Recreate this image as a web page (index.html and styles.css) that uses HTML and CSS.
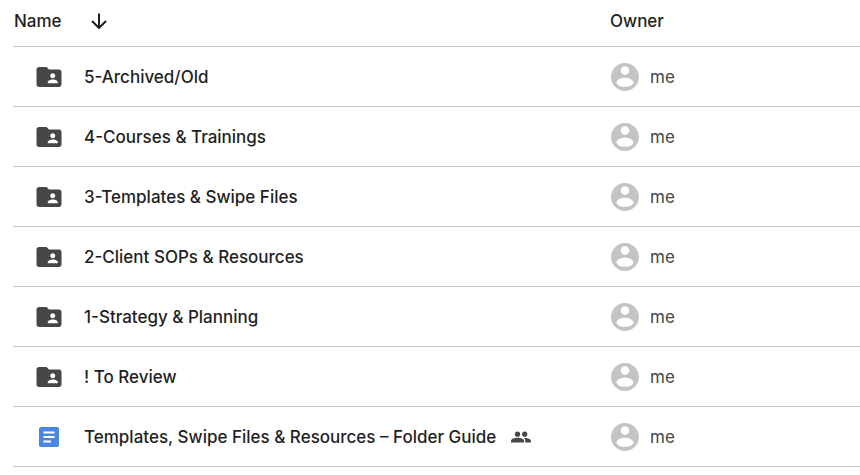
FILE: index.html
```html
<!DOCTYPE html>
<html lang="en">
<head>
<meta charset="utf-8">
<title>Files</title>
<link rel="stylesheet" href="styles.css">
</head>
<body>
<svg class="sprite" aria-hidden="true">
  <symbol id="folder" viewBox="2 4 20 16"><path d="M20 6h-8l-2-2H4c-1.1 0-1.99.9-1.99 2L2 18c0 1.1.9 2 2 2h16c1.1 0 2-.9 2-2V8c0-1.1-.9-2-2-2zm-5 3c1.1 0 2 .9 2 2s-.9 2-2 2-2-.9-2-2 .9-2 2-2zm4 8h-8v-1c0-1.33 2.67-2 4-2s4 .67 4 2v1z"/></symbol>
  <symbol id="avatar" viewBox="2 2 20 20"><path d="M12 2C6.480 2 2 6.480 2 12s4.480 10 10 10 10-4.480 10-10S17.520 2 12 2zm0 2.300c1.700 0 3.100 1.400 3.100 3.100s-1.400 3.100-3.100 3.100-3.100-1.400-3.100-3.100 1.400-3.100 3.100-3.100zM12 19c-2.800 0-5-1-6.200-2.800.4-2.400 3.200-3.700 6.200-3.700s5.800 1.300 6.200 3.700C17 18 14.800 19 12 19z"/></symbol>
</svg>
<table class="files">
  <thead>
    <tr>
      <th class="name-col" scope="col"><div class="heading">Name
        <button class="sort" type="button" aria-label="Reverse sort direction"><svg class="arrow" viewBox="0 0 16 16"><path d="M8 0.5V14.5M1 8l7 7 7-7"/></svg></button></div></th>
      <th scope="col">Owner</th>
    </tr>
  </thead>
  <tbody>
    <tr><td><div class="file"><svg class="folder"><use href="#folder"/></svg><span>5-Archived/Old</span></div></td><td><div class="owner"><svg class="avatar"><use href="#avatar"/></svg>me</div></td></tr>
    <tr><td><div class="file"><svg class="folder"><use href="#folder"/></svg><span>4-Courses &amp; Trainings</span></div></td><td><div class="owner"><svg class="avatar"><use href="#avatar"/></svg>me</div></td></tr>
    <tr><td><div class="file"><svg class="folder"><use href="#folder"/></svg><span>3-Templates &amp; Swipe Files</span></div></td><td><div class="owner"><svg class="avatar"><use href="#avatar"/></svg>me</div></td></tr>
    <tr><td><div class="file"><svg class="folder"><use href="#folder"/></svg><span>2-Client SOPs &amp; Resources</span></div></td><td><div class="owner"><svg class="avatar"><use href="#avatar"/></svg>me</div></td></tr>
    <tr><td><div class="file"><svg class="folder"><use href="#folder"/></svg><span>1-Strategy &amp; Planning</span></div></td><td><div class="owner"><svg class="avatar"><use href="#avatar"/></svg>me</div></td></tr>
    <tr><td><div class="file"><svg class="folder"><use href="#folder"/></svg><span>! To Review</span></div></td><td><div class="owner"><svg class="avatar"><use href="#avatar"/></svg>me</div></td></tr>
    <tr><td><div class="file"><svg class="doc" viewBox="0 0 20 20"><rect width="20" height="20" rx="2" fill="#4a86e0"/><path d="M4.500 5.500h11M4.500 10h11M4.500 14.500h7.500" stroke="#fff" stroke-width="2"/></svg><span>Templates, Swipe Files &amp; Resources – Folder Guide</span><svg class="people" viewBox="0 0 20 12" role="img" aria-label="Shared"><circle cx="6.500" cy="3.200" r="2.600"/><circle cx="13.700" cy="3.200" r="2.600"/><path d="M0 11.500V10c0-2 3.500-3.200 6.500-3.200S13 8 13 10v1.500zM14.300 11.500V10c0-1.200-.5-2.200-1.500-3C16 6.700 20 8 20 10v1.500z"/></svg></div></td><td><div class="owner"><svg class="avatar"><use href="#avatar"/></svg>me</div></td></tr>
  </tbody>
</table>
</body>
</html>
```
FILE: styles.css
```css
* { box-sizing: border-box; }
body {
  margin: 0;
  padding-left: 13px;
  background: #fff;
  color: #1f1f1f;
  font: 500 17px/24px Inter, Roboto, "Liberation Sans", sans-serif;
}
.sprite { position: absolute; width: 0; height: 0; }
svg { flex: none; fill: #444746; }
.files { width: 100%; table-layout: fixed; border-collapse: separate; border-spacing: 0; }
th, td { height: 60px; padding: 0; border-bottom: 1px solid #c7c7c7; text-align: left; vertical-align: middle; }
th { height: 47px; padding: 0 0 5px 1px; font-weight: 500; }
.name-col { width: 596px; }
.heading { display: flex; align-items: center; gap: 27px; }
.sort { display: flex; padding: 2px; border: 0; background: none; }
.arrow { width: 16px; height: 16px; fill: none; stroke: #1f1f1f; stroke-width: 2; }
.file, .owner { display: flex; align-items: center; }
.file { padding-left: 23px; }
.folder { width: 26px; height: 20px; margin-right: 22px; }
.doc { width: 20px; height: 20px; margin: 0 25px 0 3px; }
.people { width: 20px; height: 12px; margin-left: 15px; }
.owner { gap: 11px; padding-left: 2px; color: #444746; font-weight: 400; }
.avatar { width: 28px; height: 28px; fill: #c4c4c4; }
```
